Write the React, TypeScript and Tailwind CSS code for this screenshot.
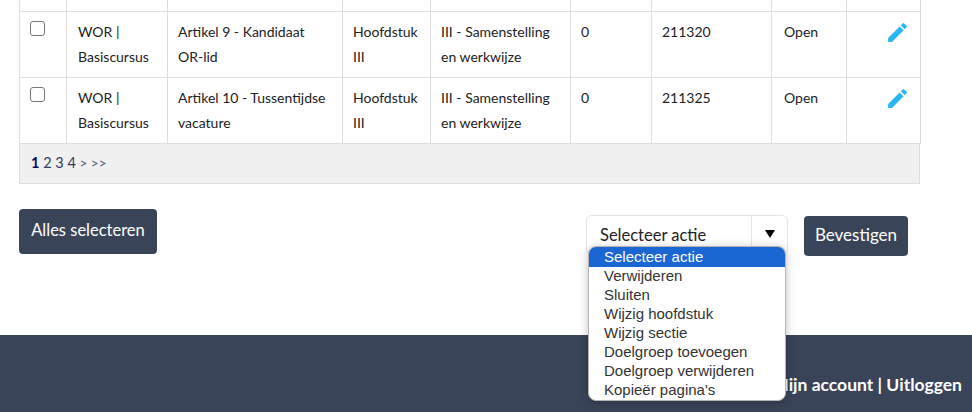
import React from 'react';
import { MdEdit } from 'react-icons/md';

const rows = [
  { title: ['Artikel 9 - Kandidaat', 'OR-lid'], id: '211320' },
  { title: ['Artikel 10 - Tussentijdse', 'vacature'], id: '211325' },
];

const options = [
  'Selecteer actie',
  'Verwijderen',
  'Sluiten',
  'Wijzig hoofdstuk',
  'Wijzig sectie',
  'Doelgroep toevoegen',
  'Doelgroep verwijderen',
  "Kopieër pagina's",
];

const base = 'border border-[#dedede] align-top pr-1 pt-[7px] pb-0';
const cell = `${base} pl-[10px]`;
const bodyFont = "font-['Lato','Open_Sans',sans-serif]";

export default function App() {
  return (
    <div className={`w-[972px] h-[412px] overflow-hidden bg-white flex flex-col ${bodyFont}`}>
      <div className="pl-[19px] w-[920px] shrink-0">
        <table className="w-[901px] table-fixed border-collapse text-[14px] leading-[25px] text-[#222]">
          <colgroup>
            <col className="w-[47px]" />
            <col className="w-[101px]" />
            <col className="w-[175px]" />
            <col className="w-[88px]" />
            <col className="w-[140px]" />
            <col className="w-[81px]" />
            <col className="w-[120px]" />
            <col className="w-[75px]" />
            <col className="w-[74px]" />
          </colgroup>
          <tbody>
            <tr className="h-[11px]">
              {Array.from({ length: 9 }).map((_, i) => (
                <td key={i} className="border border-t-0 border-[#dedede] p-0" />
              ))}
            </tr>
            {rows.map((row) => (
              <tr key={row.id} className="h-[66px]">
                <td className={cell}>
                  <div className="w-[15px] h-[15px] mt-[2px] rounded-[3px] border-[1.5px] border-[#777] bg-white" />
                </td>
                <td className={`${base} pl-[11px]`}>WOR | Basiscursus</td>
                <td className={cell}>
                  {row.title[0]}
                  <br />
                  {row.title[1]}
                </td>
                <td className={cell}>Hoofdstuk III</td>
                <td className={cell}>III - Samenstelling en werkwijze</td>
                <td className={cell}>0</td>
                <td className={cell}>{row.id}</td>
                <td className={`${base} pl-[12px]`}>Open</td>
                <td className={`${cell} pr-[10px]`}>
                  <div className="flex justify-end mt-[1px]">
                    <MdEdit className="w-[25px] h-[25px] text-[#29b6f6]" />
                  </div>
                </td>
              </tr>
            ))}
          </tbody>
        </table>
        <div className="h-[40px] bg-[#f0f0f0] border border-t-0 border-[#dedede] pl-[11px] pt-[6px] text-[14.5px] leading-[25px] text-[#2f3b63]">
          <span className="font-bold text-[#0b0b6b]">1</span> 2 3 4{' '}
          <span className="text-[13.5px] text-[#4a5578]">&gt; &gt;&gt;</span>
        </div>
      </div>

      <div className="flex items-start pl-[19px] pt-[25px] shrink-0">
        <button className="w-[138px] h-[45px] pb-[2px] rounded-[4px] bg-[#3a4459] text-white text-[16.5px]">
          Alles selecteren
        </button>
        <div className="relative ml-[429px] mt-[6px] w-[202px] h-[40px] rounded-[6px] border border-[#e4e4e4] bg-white flex text-[16.5px] text-[#222]">
          <div className="flex-1 pl-[13px] pt-[7px]">Selecteer actie</div>
          <div className="w-[36px] border-l border-[#e4e4e4] flex justify-center pt-[14px]">
            <div className="w-0 h-0 border-x-[5px] border-x-transparent border-t-[8px] border-t-black" />
          </div>
          <ul className="absolute left-[1px] top-[30px] w-[198px] h-[155px] rounded-[8px] bg-white overflow-hidden border border-[#b5b5b5] shadow-[0_2px_10px_rgba(0,0,0,0.25)] font-['Liberation_Sans',Arial,sans-serif] text-[15px] text-[#333] z-10">
            {options.map((o, i) => (
              <li key={o} className={`pl-[15px] ${i === 0 ? 'bg-[#1a66d2] text-white h-[20px] leading-[20px]' : 'h-[19px] leading-[17px]'}`}>
                {o}
              </li>
            ))}
          </ul>
        </div>
        <button className="ml-[16px] mt-[7px] w-[104px] h-[40px] pb-[1px] rounded-[4px] bg-[#3a4459] text-white text-[17px]">
          Bevestigen
        </button>
      </div>

      <div className="mt-auto h-[77px] bg-[#3a4459] flex justify-end items-start pr-[10px] pt-[37px] text-white text-[17.5px] leading-[26px] font-bold">
        Mijn account | Uitloggen
      </div>
    </div>
  );
}
